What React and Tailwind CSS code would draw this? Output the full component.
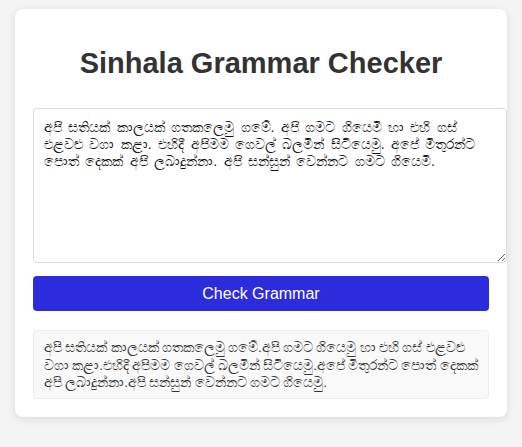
import React, { useState } from "react";

const INPUT =
  "අපි සතියක් කාලයක් ගතකලෙමු ගමේ. අපි ගමට ගියෙමි හා එහි ගස් එළවළු වගා කළා. එහිදී අපිමම ගෙවල් බලමින් සිටියෙමු. අපේ මිතුරන්ට පොත් දෙකක් අපි ලබාදුන්නා. අපි සන්සුන් වෙන්නට ගමට ගියෙමි.";

const OUTPUT =
  "අපි සතියක් කාලයක් ගතකලෙමු ගමේ.අපි ගමට ගියෙමු හා එහි ගස් එළවළු වගා කළා.එහිදී අපිමම ගෙවල් බලමින් සිටියෙමු.අපේ මිතුරන්ට පොත් දෙකක් අපි ලබාදුන්නා.අපි සන්සුන් වෙන්නට ගමට ගියෙමු.";

export default function App() {
  const [text, setText] = useState(INPUT);

  return (
    <div className="min-h-screen bg-[#f4f4f4] pt-[9px] font-['Liberation_Sans',Arial,sans-serif]">
      <div className="w-[492px] mx-auto bg-white rounded-lg shadow-[0_2px_8px_rgba(0,0,0,0.1)] px-[18px] pt-[38px] pb-[18px]">
        <h1 className="text-[29px] leading-[33px] font-bold text-[#333] text-center mb-[28px]">
          Sinhala Grammar Checker
        </h1>

        <textarea
          value={text}
          onChange={(e) => setText(e.target.value)}
          className="block w-[474px] h-[155px] p-[10px] border border-[#ddd] rounded text-[14.2px] leading-[17px] [word-spacing:2.45px] text-[#111] bg-white"
        />

        <button className="mt-[13px] w-full h-[35px] bg-[#2c2cdd] text-white text-base rounded">
          Check Grammar
        </button>

        <div className="mt-[19px] h-[69px] px-[10px] py-[8px] bg-[#f9f9f9] border border-[#eee] rounded text-[13.6px] leading-[17.5px] [word-spacing:-0.5px] text-[#333]">
          {OUTPUT}
        </div>
      </div>
    </div>
  );
}
